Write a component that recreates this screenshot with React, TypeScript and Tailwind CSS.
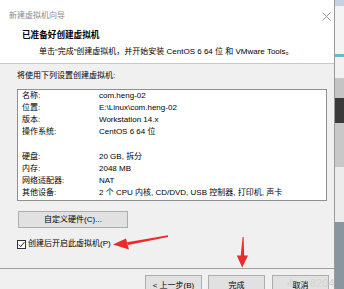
const rowsTop = [
  ['名称:', 'com.heng-02'],
  ['位置:', 'E:\\Linux\\com.heng-02'],
  ['版本:', 'Workstation 14.x'],
  ['操作系统:', 'CentOS 6 64 位'],
];

const rowsBottom = [
  ['硬盘:', '20 GB, 拆分'],
  ['内存:', '2048 MB'],
  ['网络适配器:', 'NAT'],
  ['其他设备:', '2 个 CPU 内核, CD/DVD, USB 控制器, 打印机, 声卡'],
];

const Row = ({ label, value }: { label: string; value: string }) => (
  <div className="flex h-[12px] items-center whitespace-nowrap">
    <span className="w-[77px] shrink-0">{label}</span>
    <span>{value}</span>
  </div>
);

const App = () => {
  return (
    <div className="relative flex h-[289px] w-[344px] overflow-hidden bg-[#f0f0f0] font-['Liberation_Sans','Noto_Sans_CJK_SC',sans-serif] text-[8px] text-black">
      <div className="flex w-[335px] shrink-0 flex-col border-r border-[#9a9a9a]">
        {/* header */}
        <div className="relative h-[64px] shrink-0 border-b border-[#c9c9c9] bg-white">
          <div className="flex h-[30px] items-center pl-[9px] pt-[2px] text-[#8a8a8a]">新建虚拟机向导</div>
          <svg className="absolute left-[322px] top-[12px]" width="9" height="9" viewBox="0 0 9 9">
            <path d="M0.5 0.5 L8.5 8.5 M8.5 0.5 L0.5 8.5" stroke="#8c8c8c" strokeWidth="0.9" />
          </svg>
          <div className="flex h-[11px] items-center pl-[22px] text-[8.6px] font-bold">已准备好创建虚拟机</div>
          <div className="mt-[5px] flex h-[11px] items-center whitespace-nowrap pl-[39px]">
            单击“完成”创建虚拟机，并开始安装 CentOS 6 64 位 和 VMware Tools。
          </div>
        </div>

        {/* body */}
        <div className="flex flex-1 flex-col">
          <div className="flex flex-col pl-[17px]">
            <div className="mt-[6px] flex h-[12px] items-center">将使用下列设置创建虚拟机:</div>
            <div className="mt-[7px] flex h-[112px] w-[310px] flex-col border border-[#8f8f8f] bg-white pl-[4px]">
              {rowsTop.map(([l, v]) => (
                <Row key={l} label={l} value={v} />
              ))}
              <div className="h-[13px]" />
              {rowsBottom.map(([l, v]) => (
                <Row key={l} label={l} value={v} />
              ))}
            </div>
            <button className="ml-[1px] mt-[10px] flex h-[17px] w-[110px] items-center justify-center border border-[#adadad] bg-[#e1e1e1]">
              自定义硬件(C)...
            </button>
            <div className="mt-[10px] flex h-[12px] items-center">
              <div className="flex h-[9px] w-[9px] items-center justify-center border border-[#333] bg-white">
                <svg width="7" height="7" viewBox="0 0 7 7">
                  <path d="M0.8 3.6 L2.7 5.6 L6.3 1.2" fill="none" stroke="#222" strokeWidth="1" />
                </svg>
              </div>
              <span className="ml-[2px]">创建后开启此虚拟机(P)</span>
            </div>
          </div>
          <div className="flex-1" />
          <div className="flex h-[21px] shrink-0 border-t border-[#a0a0a0] pt-[6px]">
            <button className="ml-[145px] flex h-[22px] w-[57px] items-center justify-center border border-[#adadad] bg-[#e1e1e1]">
              &lt; 上一步(B)
            </button>
            <button className="ml-[6px] flex h-[22px] w-[57px] items-center justify-center border border-[#adadad] bg-[#e1e1e1]">
              完成
            </button>
            <button className="ml-[7px] flex h-[22px] w-[57px] items-center justify-center border border-[#adadad] bg-[#e1e1e1]">
              取消
            </button>
          </div>
        </div>
      </div>

      {/* desktop strip behind the dialog */}
      <div className="flex w-[9px] flex-col">
        <div className="h-[6px] bg-[#c6d1e2]" />
        <div className="h-[48px] bg-[#f4f4f4]" />
        <div className="h-[3px] bg-[#6fb7c4]" />
        <div className="h-[21px] bg-[#f2f2f2]" />
        <div className="h-[20px] bg-[#c4c4c4]" />
        <div className="h-[25px] bg-[#3a3a3a]" />
        <div className="h-[44px] bg-[#c8c8c8]" />
        <div className="h-[55px] bg-[#ececec]" />
        <div className="flex-1 bg-[#8896a0]" />
      </div>

      {/* watermark */}
      <div className="absolute left-[287px] top-[278px] text-[11px] leading-none text-[#d2d2d2]">4</div>
      <div className="absolute left-[310px] top-[278px] text-[11px] leading-none text-[#d2d2d2]">8204</div>

      {/* red annotation arrows */}
      <svg className="pointer-events-none absolute left-0 top-0" width="344" height="289">
        <polygon points="168,235.3 168,236.9 128,245 127,242.2" fill="#ec2a2a" />
        <polygon points="113,244.5 126,238.5 129,249.5" fill="#ec2a2a" />
        <polygon points="242.6,237 243.6,237 244.2,257 240.6,257" fill="#ec2a2a" />
        <polygon points="236.8,255.5 248,255.5 242.2,267.5" fill="#ec2a2a" />
      </svg>
    </div>
  );
};

export default App;
